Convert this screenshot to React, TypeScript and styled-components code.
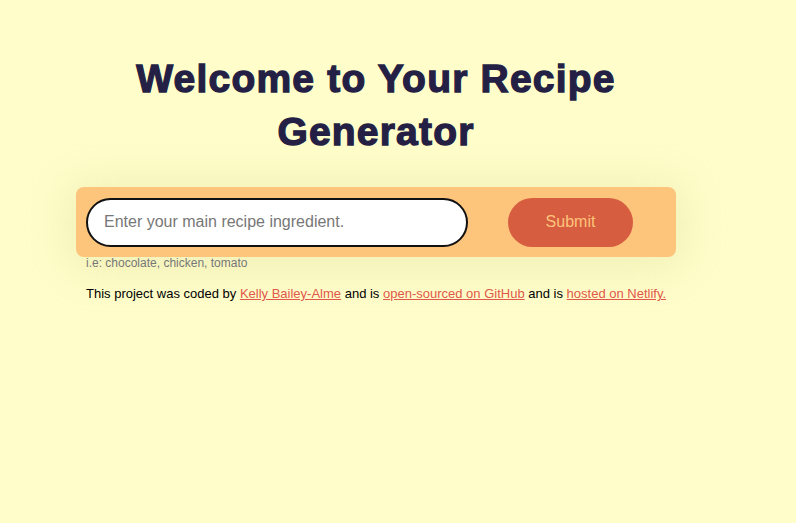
import React from "react";
import styled, { createGlobalStyle } from "styled-components";

const Global = createGlobalStyle`
  html, body { margin: 0; padding: 0; background: #fffecb; }
  body { font-family: "Liberation Sans", Arial, sans-serif; }
`;

const Page = styled.div`
  min-height: 523px;
  background: #fffecb;
  padding: 52px 0 0 76px;
  box-sizing: border-box;
`;

const Column = styled.div`
  width: 600px;
  display: flex;
  flex-direction: column;
`;

const Title = styled.h1`
  margin: 0 0 29px;
  text-align: center;
  font-family: "Liberation Sans", Arial, sans-serif;
  font-weight: 700;
  font-size: 39px;
  line-height: 53px;
  color: #241f44;
  -webkit-text-stroke: 1.3px #241f44;
  letter-spacing: 1.2px;
`;

const Card = styled.div`
  box-shadow: 0 4px 40px 12px rgba(190, 190, 110, 0.2);
  border-radius: 10px;
`;

const Form = styled.form`
  background: #fdc47c;
  border-radius: 8px;
  padding: 10px;
  display: flex;
  align-items: center;
  gap: 40px;
  height: 70px;
  box-sizing: border-box;
`;

const Input = styled.input`
  width: 382px;
  height: 49px;
  box-sizing: border-box;
  border: 2px solid #111;
  border-radius: 25px;
  background: #fff;
  padding: 0 16px;
  font-family: "Liberation Sans", Arial, sans-serif;
  font-size: 16px;
  color: #333;
  outline: none;
  &::placeholder { color: #777; }
`;

const Button = styled.button`
  width: 125px;
  height: 49px;
  border: none;
  border-radius: 25px;
  background: #d65d3f;
  color: #fdc47c;
  font-family: "Liberation Sans", Arial, sans-serif;
  font-size: 16px;
`;

const Hint = styled.div`
  padding: 0 0 0 10px;
  margin-top: -1px;
  font-size: 12px;
  line-height: 14px;
  color: #777;
`;

const Footer = styled.p`
  margin: 16px 0 0;
  padding-left: 10px;
  font-size: 13px;
  line-height: 15px;
  color: #000;
  white-space: nowrap;
`;

const Link = styled.a`
  color: #e0584a;
  text-decoration: underline;
`;

export default function App() {
  return (
    <>
      <Global />
      <Page>
        <Column>
          <Title>
            Welcome to Your Recipe
            <br />
            Generator
          </Title>
          <Card>
            <Form onSubmit={(e) => e.preventDefault()}>
              <Input placeholder="Enter your main recipe ingredient." />
              <Button type="submit">Submit</Button>
            </Form>
          </Card>
          <Hint>i.e: chocolate, chicken, tomato</Hint>
          <Footer>
            This project was coded by <Link href="#">Kelly Bailey-Alme</Link> and is{" "}
            <Link href="#">open-sourced on GitHub</Link> and is{" "}
            <Link href="#">hosted on Netlify.</Link>
          </Footer>
        </Column>
      </Page>
    </>
  );
}
